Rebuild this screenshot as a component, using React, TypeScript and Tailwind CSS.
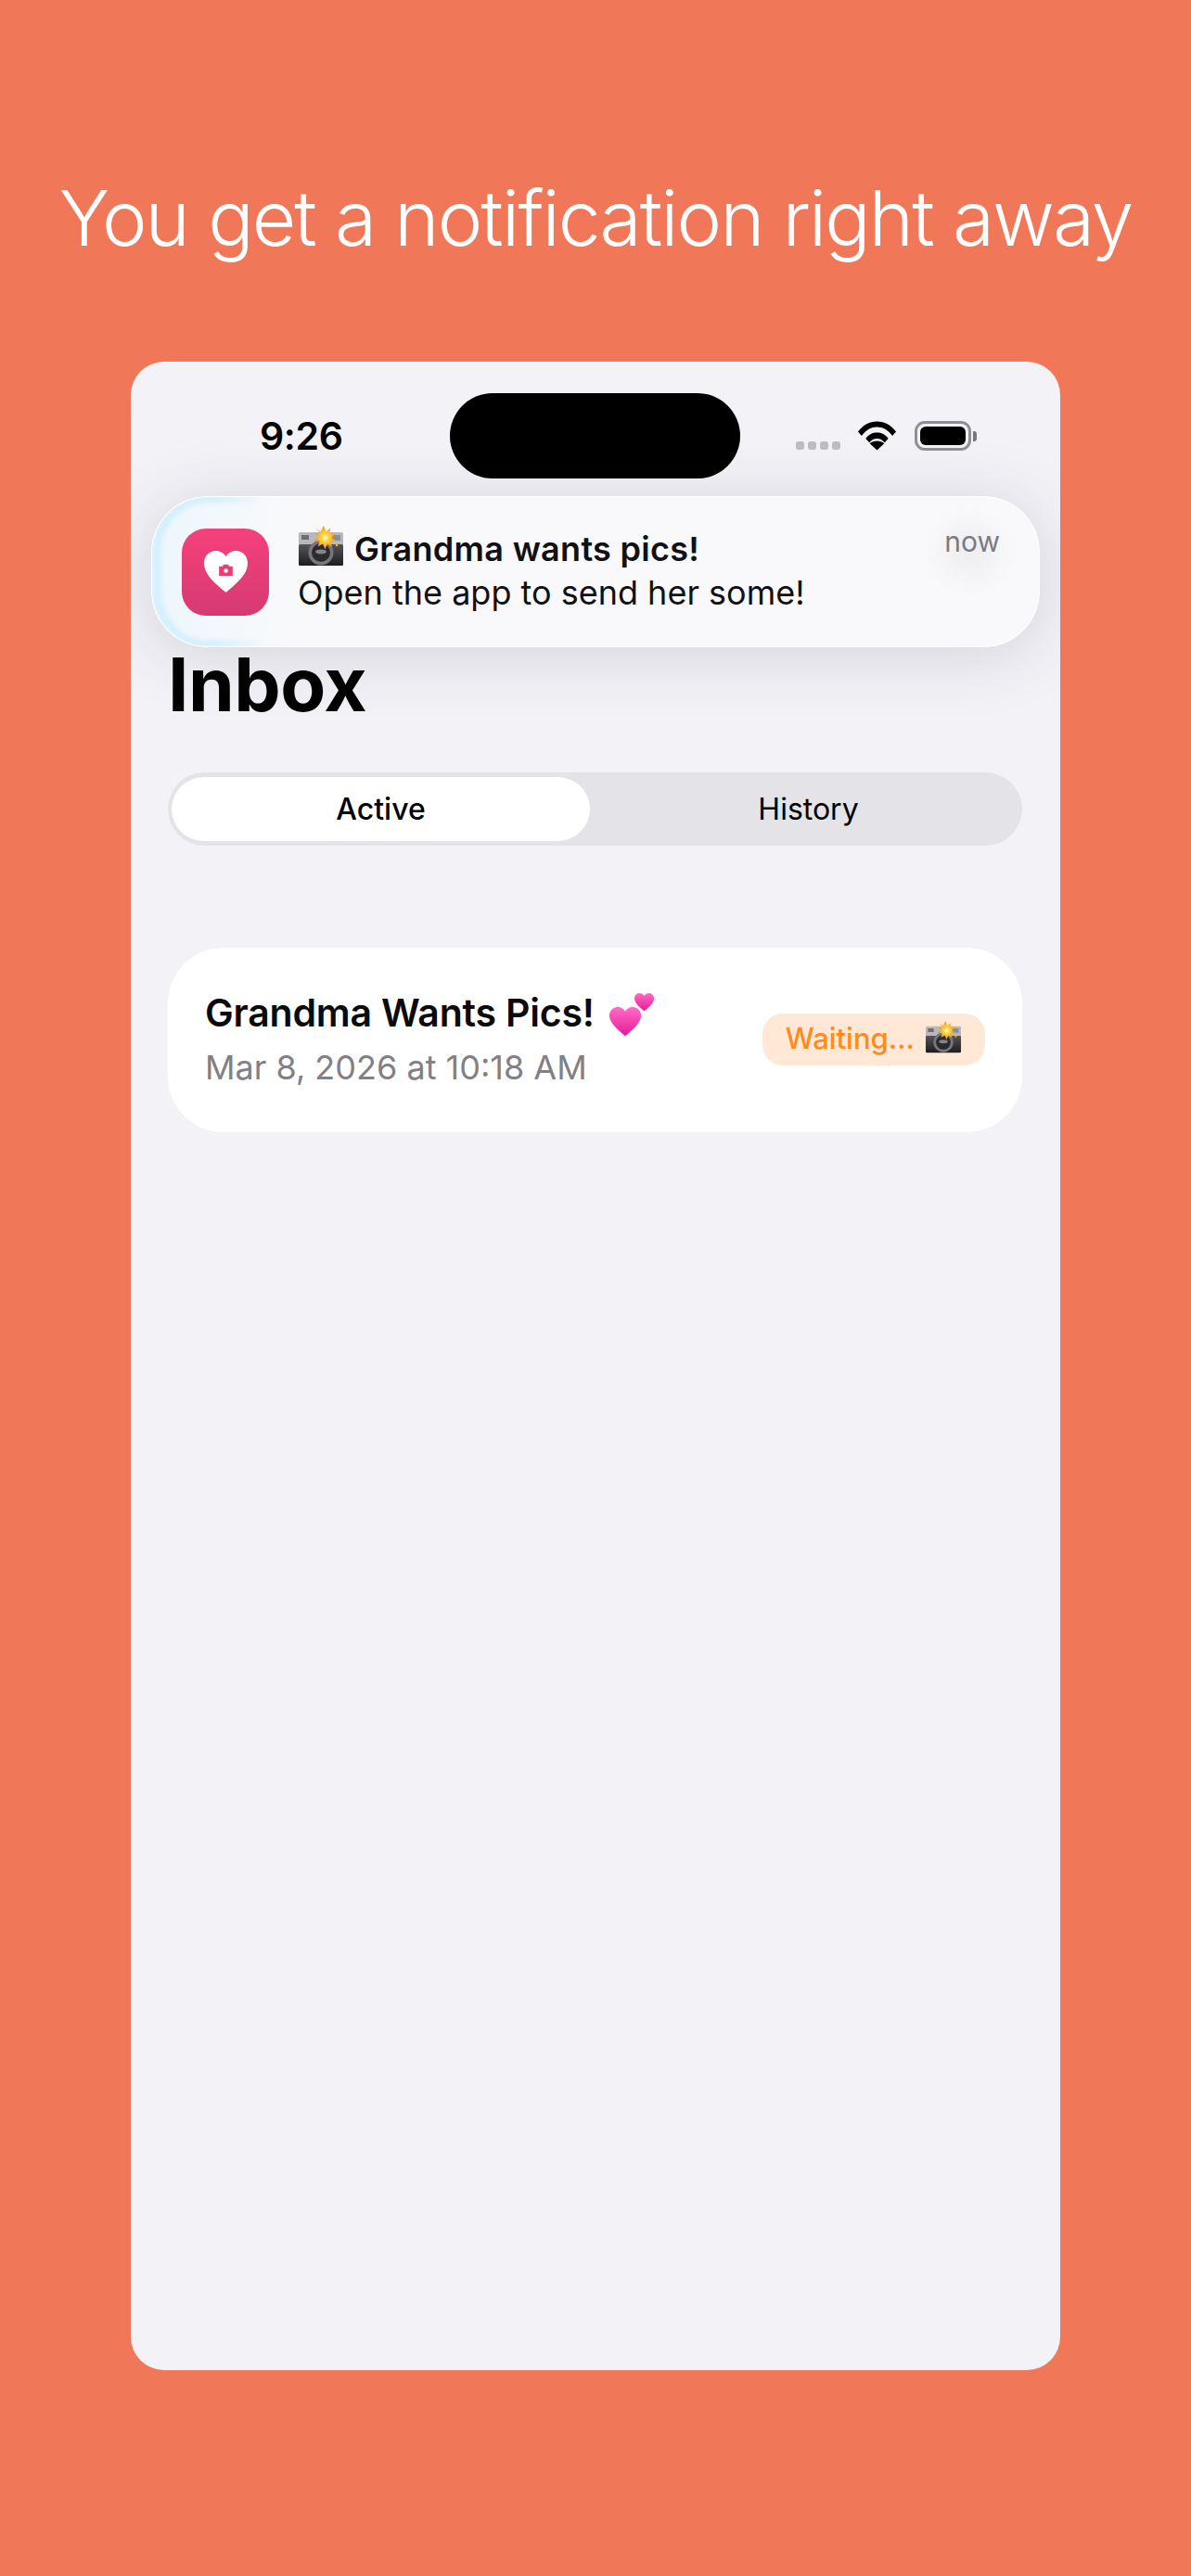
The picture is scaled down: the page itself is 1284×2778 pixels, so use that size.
const inter = { fontFamily: 'Inter, "Noto Sans", sans-serif' };

// Camera with flash emoji, no emoji font in the sandbox so drawn by hand
function CameraFlash({ className }: { className?: string }) {
    return (
        <svg viewBox="0 0 48 44" className={className}>
            <defs>
                <linearGradient id="camBody" x1="0" y1="0" x2="0" y2="1">
                    <stop offset="0%" stopColor="#55555a" />
                    <stop offset="100%" stopColor="#1d1d20" />
                </linearGradient>
                <radialGradient id="flash">
                    <stop offset="0%" stopColor="#fffbe0" />
                    <stop offset="35%" stopColor="#ffd53a" />
                    <stop offset="100%" stopColor="#f98a12" />
                </radialGradient>
            </defs>
            <rect x="0" y="7" width="48" height="15" rx="1.5" fill="#b9b9bd" />
            <rect x="0" y="20" width="48" height="23" rx="1.5" fill="url(#camBody)" />
            <rect x="3" y="10" width="8" height="5" fill="#6d6d72" />
            <rect x="36" y="10" width="9" height="6" fill="#8e8e92" />
            <circle cx="24" cy="29" r="13.5" fill="#77777c" />
            <circle cx="24" cy="29" r="10" fill="#2b2b2f" />
            <ellipse cx="24" cy="28" rx="6" ry="2.5" fill="#85858a" />
            <circle cx="41" cy="21" r="1.3" fill="#f5b400" />
            <path
                d="M27 0l2.4 6.4L34 2.6l-.8 6.4 6.4-.6-4.2 4.6 5 3-6.2 1 2 6-5.4-3.4-2.4 6-2.4-6-5.4 3 2-5.8-6-1.2 5-3-4.2-4.8 6.2.8L18.600 2.600l4.800 3.800z"
                fill="url(#flash)"
            />
        </svg>
    );
}

function TwoHearts({ className }: { className?: string }) {
    const heart = 'M12 22C5 16 0 11.500 0 6.500 0 2.800 2.800 0 6.200 0 8.600 0 10.800 1.300 12 3.400 13.200 1.300 15.400 0 17.800 0 21.200 0 24 2.800 24 6.500 24 11.500 19 16 12 22z';
    return (
        <svg viewBox="0 0 48 47" className={className}>
            <defs>
                <linearGradient id="heartFill" x1="0" y1="0" x2="0" y2="1">
                    <stop offset="0%" stopColor="#ff6cc4" />
                    <stop offset="100%" stopColor="#e8189a" />
                </linearGradient>
            </defs>
            <path d={heart} fill="url(#heartFill)" transform="translate(27 0) scale(0.88)" />
            <path d={heart} fill="url(#heartFill)" transform="translate(0 15) scale(1.42)" />
        </svg>
    );
}

function AppIcon() {
    return (
        <div className="w-[94px] h-[94px] shrink-0 rounded-[26px] bg-gradient-to-b from-[#f6407c] to-[#d63a72] flex items-center justify-center">
            <svg viewBox="0 0 48 46" className="w-[47px] h-[45px]">
                <path
                    d="M24 46C10 34 0 25.500 0 13.500 0 5.500 5.800 0 13 0 17.600 0 21.800 2.400 24 6.200 26.200 2.400 30.400 0 35 0 42.200 0 48 5.500 48 13.500 48 25.500 38 34 24 46z"
                    fill="#fff"
                />
                <path d="M16.500 17h4l1-2h5l1 2h4v10.500h-15z" fill="#ea3d77" />
                <circle cx="24" cy="22" r="2.400" fill="#fff" />
            </svg>
        </div>
    );
}

function StatusBar() {
    return (
        <div className="flex items-center h-[92px] mt-[34px] pl-[139px]">
            <div className="w-[205px] shrink-0 text-[41px] leading-none font-semibold tracking-[-0.4px] text-black" style={inter}>9:26</div>
            <div className="w-[313px] h-[92px] shrink-0 rounded-[46px] bg-black" />
            <div className="flex items-center ml-[60px] shrink-0">
                <div className="flex gap-[4px] mt-[20px]">
                    <span className="w-[9px] h-[9px] rounded-[3px] bg-[#bdbdc2]" />
                    <span className="w-[9px] h-[9px] rounded-[3px] bg-[#bdbdc2]" />
                    <span className="w-[9px] h-[9px] rounded-[3px] bg-[#bdbdc2]" />
                    <span className="w-[9px] h-[9px] rounded-[3px] bg-[#bdbdc2]" />
                </div>
                <svg viewBox="0 0 42 32" className="w-[41px] h-[32px] ml-[19px]">
                    <path d="M0 11.500C5.500 3.800 13 0 21 0s15.500 3.800 21 11.500l-4 4.500C33 9.500 27.500 6.300 21 6.300S9 9.500 4 16z" fill="#000" />
                    <path d="M8.500 19C12 14.500 16 12.500 21 12.500S30 14.500 33.500 19l-4 4.500C27 20.500 24.500 19 21 19s-6 1.500-8.500 4.500z" fill="#000" />
                    <path d="M21 32l-8-7.500C15 22.500 18 21.700 21 21.700s6 .8 8 2.800z" fill="#000" />
                </svg>
                <div className="w-[61px] h-[32px] ml-[20px] rounded-[11px] border-[3px] border-[#8f8f94] p-[3px]">
                    <div className="w-full h-full rounded-[6px] bg-black" />
                </div>
                <div className="w-[4px] h-[11px] ml-[2px] rounded-r-[3px] bg-[#77777c]" />
            </div>
        </div>
    );
}

function NotificationBanner() {
    return (
        <div className="absolute left-[22px] top-[145px] w-[958px] h-[163px] rounded-[60px] bg-[#f9f9fb] border border-white shadow-[0_8px_70px_rgba(60,60,70,0.17)] flex items-center pl-[32px] pr-[42px] overflow-hidden" style={inter}>
            {/* Glass edge, blue on the left and a grey smudge by the timestamp */}
            <div className="absolute left-0 inset-y-0 w-[120px] rounded-l-[60px] border-l-[9px] border-y-[5px] border-[#aee3fb] blur-[3px] [mask-image:linear-gradient(to_right,black_55%,transparent)]" />
            <div className="absolute left-0 inset-y-0 w-[160px] rounded-l-[60px] bg-gradient-to-r from-[#e6f6fe] to-transparent opacity-60" />
            <div className="absolute right-[44px] top-[30px] w-[60px] h-[58px] rounded-full bg-[#efeff1] blur-[12px]" />
            <div className="relative"><AppIcon /></div>
            <div className="relative flex-1 ml-[31px] -mt-[4px]">
                <div className="flex items-center h-[46px]">
                    <CameraFlash className="w-[48px] h-[44px] ml-[1px] -mt-[6px] shrink-0" />
                    <span className="ml-[12px] text-[36px] leading-none font-semibold tracking-[0.3px] text-[#111114] whitespace-nowrap">Grandma wants pics!</span>
                </div>
                <div className="mt-[2px] text-[36px] leading-[44px] text-[#111114] whitespace-nowrap">Open the app to send her some!</div>
            </div>
            <div className="relative self-start mt-[33px] text-[30px] leading-none text-[#7b7b80]">now</div>
        </div>
    );
}

function Tabs() {
    return (
        <div className="flex h-[79px] rounded-[40px] bg-[#e3e3e8] p-[5px] pl-[4px] text-[32px] text-black" style={inter}>
            <div className="w-[451px] rounded-[35px] bg-white flex items-center justify-center font-medium">Active</div>
            <div className="flex-1 flex items-center justify-center pl-[10px]">History</div>
        </div>
    );
}

function RequestCard() {
    return (
        <div className="mt-[110px] h-[199px] rounded-[60px] bg-white flex items-center justify-between pl-[40px] pr-[40px]" style={inter}>
            <div>
                <div className="flex items-center h-[48px] -mt-[2px]">
                    <span className="text-[41px] leading-none font-semibold tracking-[-0.2px] text-[#0b0b0d] whitespace-nowrap">Grandma Wants Pics!</span>
                    <TwoHearts className="w-[48px] h-[47px] ml-[16px] mt-[4px]" />
                </div>
                <div className="mt-[13px] text-[36px] leading-[44px] text-[#808085] whitespace-nowrap">Mar 8, 2026 at 10:18 AM</div>
            </div>
            <div className="flex items-center h-[56px] -mt-[2px] rounded-[22px] bg-[#ffe8d6] pl-[25px] pr-[26px] text-[31px] font-medium text-[#ff8a1f]">
                <span>Waiting...</span>
                <CameraFlash className="w-[38px] h-[35px] ml-[12px] -mt-[4px]" />
            </div>
        </div>
    );
}

export default function App() {
    return (
        <div className="w-[1284px] h-[2778px] bg-[#f17759] flex flex-col items-center overflow-hidden">
            <h1 className="mt-[184px] text-[82px] leading-[104px] font-light tracking-[-1.9px] text-white whitespace-nowrap" style={inter}>
                You get a notification right away
            </h1>
            <div className="relative mt-[102px] w-[1002px] h-[2166px] rounded-[36px] bg-[#f2f2f7] overflow-hidden">
                <StatusBar />
                <div className="pl-[40px] pr-[41px]">
                    <h2 className="mt-[174px] text-[80px] leading-[96px] font-bold tracking-[-0.5px] text-black" style={inter}>Inbox</h2>
                    <div className="mt-[47px]"><Tabs /></div>
                    <RequestCard />
                </div>
                <NotificationBanner />
            </div>
        </div>
    );
}
